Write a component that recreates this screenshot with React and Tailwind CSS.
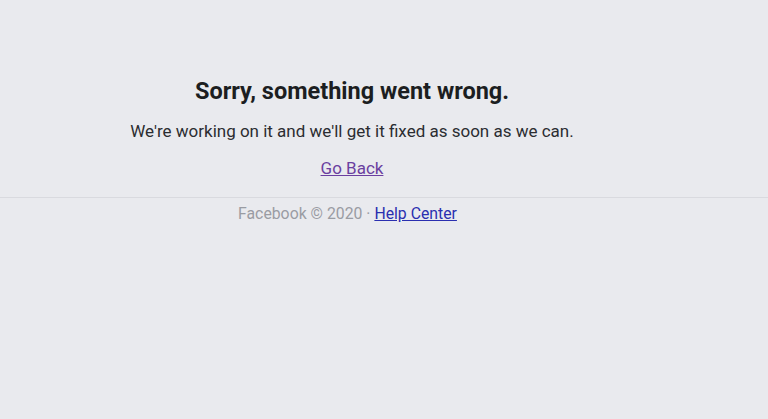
export default function App() {
  return (
    <div className="min-h-[419px] w-full bg-[#e9eaee] font-['Roboto',sans-serif]">
      <div className="w-[704px] pt-[76px] flex flex-col items-center text-center">
        <h1 className="text-[23.5px] leading-[30px] font-bold text-[#1c1e21]">Sorry, something went wrong.</h1>
        <p className="mt-[14px] text-[17px] leading-[22px] text-[#2b2d31]">We're working on it and we'll get it fixed as soon as we can.</p>
        <a href="#" className="mt-[15px] text-[17px] leading-[22px] text-[#6b3fa0] underline">Go Back</a>
      </div>
      <div className="mt-[18px] border-t border-[#d9dadf]">
        <div className="w-[695px] pt-[6px] text-center text-[15.8px] leading-[20px] text-[#9a9ca3]">
          Facebook © 2020 · <a href="#" className="text-[#2a2fb0] underline">Help Center</a>
        </div>
      </div>
    </div>
  );
}
